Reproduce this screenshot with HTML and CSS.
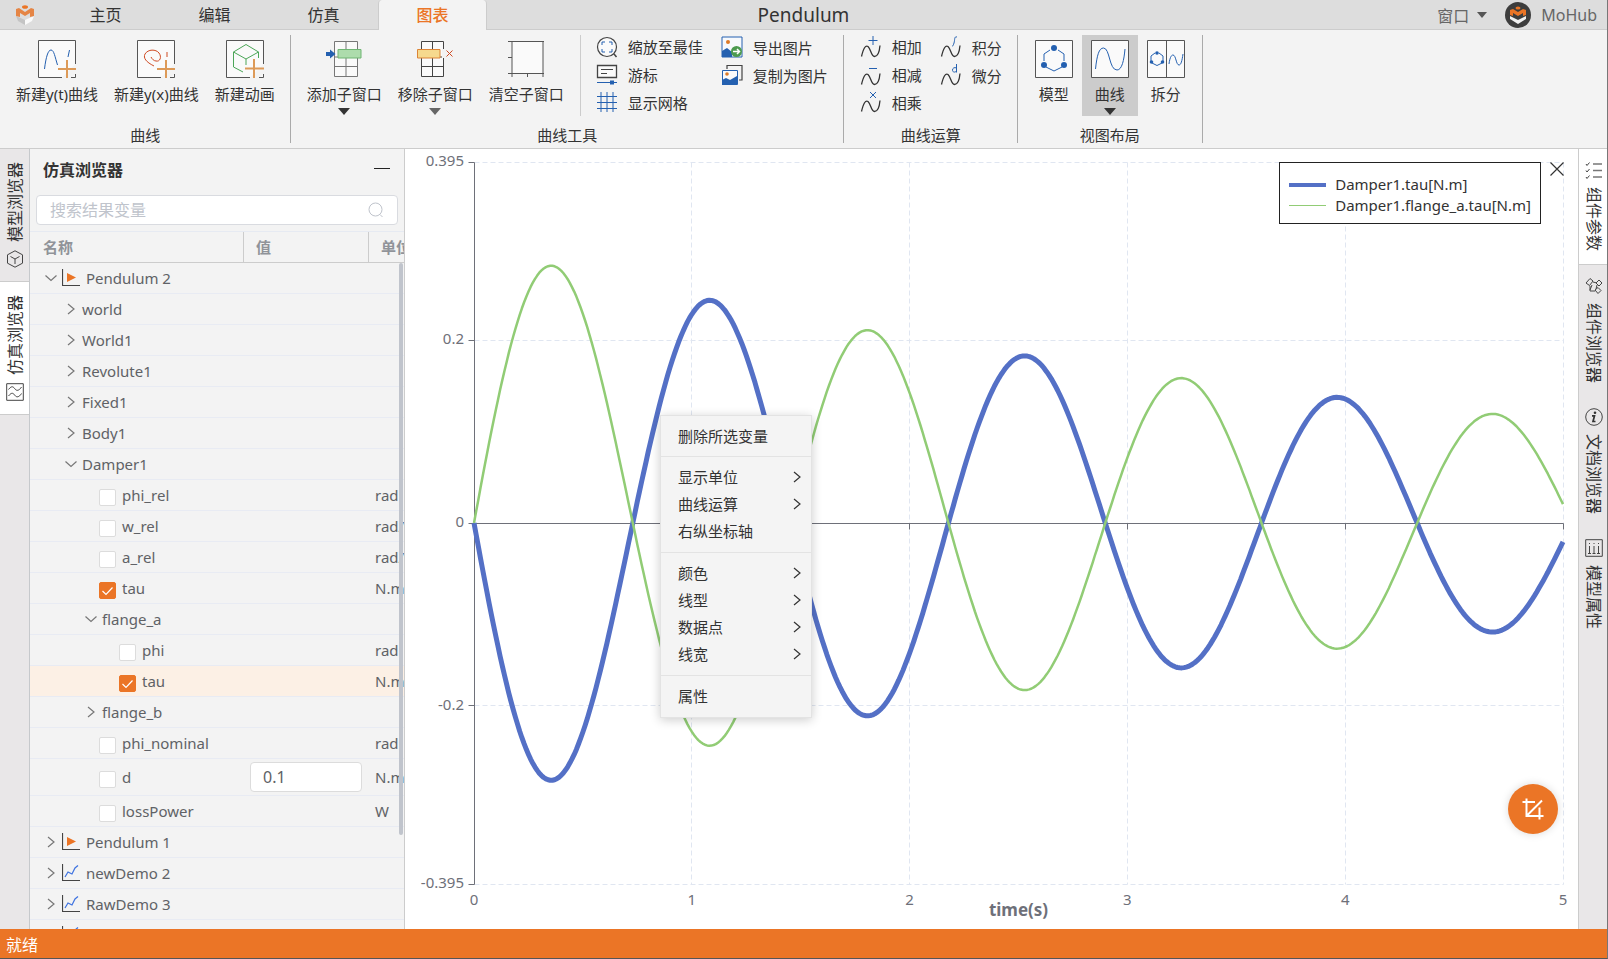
FILE: index.html
```html
<!DOCTYPE html>
<html lang="zh-CN">
<head>
  <meta charset="UTF-8">
  <meta name="viewport" content="width=device-width, initial-scale=1">
  <title>Pendulum</title>
  <link rel="stylesheet" href="styles.css">
</head>
<body>
  <!-- shared icon shapes -->
  <svg class="defs" aria-hidden="true">
    <symbol id="wave" viewBox="0 0 22 22">
      <path d="M1.500 20.500C3.500 12 5.500 9 8 10.500C11 13 11 20.500 14.500 20.500C18 20.500 19.500 15 20 9.500" fill="none" stroke="#333" stroke-width="1.300"/>
    </symbol>
    <symbol id="right" viewBox="0 0 12 12"><path d="M3 1l6 5-6 5" fill="none" stroke="currentColor" stroke-width="1.200"/></symbol>
    <symbol id="down" viewBox="0 0 12 12"><path d="M0.500 3.500L6 8.500l5.500-5" fill="none" stroke="currentColor" stroke-width="1.200"/></symbol>
    <symbol id="run" viewBox="0 0 18 18">
      <path d="M0.500 0v16.500H18" fill="none" stroke="#444" stroke-width="1.200"/>
      <path d="M5 4l9 4.500L5 13z" fill="#eb7526"/>
    </symbol>
    <symbol id="data" viewBox="0 0 18 18">
      <path d="M0.500 0v16.500H18" fill="none" stroke="#444" stroke-width="1.200"/>
      <path d="M3 13l3-5 4 2 3-6 3-2.500" fill="none" stroke="#3d72e0" stroke-width="1.200"/>
    </symbol>
  </svg>

  <header class="titlebar">
    <div class="titlebar-left">
      <svg class="logo" viewBox="0 0 18 20">
        <path d="M0 11l9 4v5l-7-4z" fill="#c4c4c4"/>
        <path d="M18 11l-9 4v5l7-4z" fill="#fafafa"/>
        <path d="M0 11V4l3-1 6 4 6-4 3 1v7l-4 1V8l-5 3-5-3v4z" fill="#e58545"/>
        <ellipse cx="9" cy="2" rx="3" ry="1.800" fill="#eb7526"/>
      </svg>
      <nav class="tabs">
        <button class="tab">主页</button>
        <button class="tab">编辑</button>
        <button class="tab">仿真</button>
        <button class="tab active">图表</button>
      </nav>
    </div>
    <div class="doc-title">Pendulum</div>
    <div class="titlebar-right">
      <button class="window-btn">窗口 <span class="caret small"></span></button>
      <svg class="avatar" viewBox="0 0 26 26">
        <circle cx="13" cy="13" r="13" fill="#3d3d3d"/>
        <path d="M5 14l8 4 8-4v3l-8 5-8-5z" fill="#f0f0f0"/>
        <path d="M5 13V8l3-1 5 3 5-3 3 1v5l-3 1v-3l-5 3-5-3v3z" fill="#eb7526"/>
        <ellipse cx="13" cy="6" rx="2.500" ry="1.500" fill="#eb7526"/>
      </svg>
      <span class="user">MoHub</span>
    </div>
  </header>

  <section class="ribbon">
    <div class="group">
      <div class="group-body">
        <button class="big">
          <svg viewBox="0 0 38 38"><path d="M37.500 24V0.500H0.500v37H24M33 37.500h4.500V34" class="frame"/><path d="M6.500 29C8 17 10 10 13 10s4 7 6.500 15M30 17l1.500-7" class="blue"/><path d="M20 29h18M29 20v18" class="plus"/></svg>
          新建y(t)曲线
        </button>
        <button class="big">
          <svg viewBox="0 0 38 38"><path d="M37.500 24V0.500H0.500v37H24M33 37.500h4.500V34" class="frame"/><path d="M17 26C9 22 6 18 8 14c3-5 11-5 14-1s1 9-3 8c-2 0-4-2-5-4M30 17v-5" class="red"/><path d="M20 29h18M29 20v18" class="plus"/></svg>
          新建y(x)曲线
        </button>
        <button class="big">
          <svg viewBox="0 0 38 38"><path d="M37.500 24V0.500H0.500v37H24M33 37.500h4.500V34" class="frame"/><path d="M20 4.500L7.500 12v15L17 32M20 4.500L32.500 12v6M7.500 12L20 19l12.500-7M20 19v6" class="green"/><path d="M19 28.500h19M28 19v19" class="plus"/></svg>
          新建动画
        </button>
      </div>
      <div class="group-name">曲线</div>
    </div>

    <div class="group">
      <div class="group-body">
        <button class="big">
          <svg viewBox="0 0 38 38"><path d="M9.500 1.500h23v35h-23zM21 1v36M9 26.500h24M9 17h24" class="grid-box"/><path d="M30 9h4v9h-4z" fill="#f3f3f3"/><path d="M13 9.500h23v8.500H13z" fill="#addcac" stroke="#6fb573"/><path d="M1 12h4V9.500l5.500 4.500L5 18.500V16H1z" fill="#2460b0"/></svg>
          添加子窗口
          <span class="caret"></span>
        </button>
        <button class="big">
          <svg viewBox="0 0 38 38"><path d="M5.500 1.500h22v35h-22zM16.500 1v36M5 26.500h23M5 17h23" class="grid-box dark"/><path d="M26 9h4v9h-4z" fill="#f3f3f3"/><path d="M1.500 9.500H24V18H1.500z" fill="#f6d98e" stroke="#dc8436"/><path d="M30.500 10.500l6 6M36.500 10.500l-6 6" class="red"/></svg>
          移除子窗口
          <span class="caret light"></span>
        </button>
        <button class="big">
          <svg viewBox="0 0 38 38"><path d="M5 1.500h31v32H5z" fill="#fafafa"/><path d="M1 1.500h36M1 17.500h4M1 33.500h36M5 1v36M36 1v36M20.500 33v4" class="frame"/></svg>
          清空子窗口
        </button>
        <div class="divider"></div>
        <div class="stack">
          <button class="small-btn">
            <svg viewBox="0 0 22 22"><circle cx="11" cy="11" r="9.500" fill="#fafafa" stroke="#444" stroke-width="1.200"/><path d="M18 18l2.500 3" stroke="#444" stroke-width="1.500"/><path d="M6 9V6h3M13 6h3v3M16 13v3h-3M9 16H6v-3" class="blue"/></svg>
            缩放至最佳
          </button>
          <button class="small-btn">
            <svg viewBox="0 0 22 22"><path d="M1.500 1.500h19v12h-19z" fill="#fafafa" stroke="#444" stroke-width="1.300"/><path d="M5 5.500h12M5 9.500h6" stroke="#444"/><path d="M1 18.500h20" class="blue"/><path d="M14 16.500h4v4h-4z" fill="#2460b0"/></svg>
            游标
          </button>
          <button class="small-btn">
            <svg viewBox="0 0 22 22"><path d="M5 1v20M11 1v20M17 1v20M1 5.500h20M1 11.500h20M1 17.500h20" class="blue"/></svg>
            显示网格
          </button>
        </div>
        <div class="stack">
          <button class="small-btn">
            <svg viewBox="0 0 22 22"><path d="M1 1h20v20H1z" fill="#f7f9fc" stroke="#2460b0"/><circle cx="7" cy="6" r="2" fill="#dc7a28"/><path d="M1 21v-6l5-3 5 4v5z" fill="#2460b0"/><circle cx="15.500" cy="15.500" r="5.500" fill="#4c9a4f"/><path d="M12 15.500h6M16 13l2.500 2.500L16 18" fill="none" stroke="#fff" stroke-width="1.500"/></svg>
            导出图片
          </button>
          <button class="small-btn">
            <svg viewBox="0 0 22 22"><path d="M6 5V1.500h15V16h-3" fill="none" stroke="#444" stroke-width="1.200"/><path d="M1.500 6.500h15v14h-15z" fill="#fafafa" stroke="#2460b0"/><circle cx="6" cy="10" r="1.800" fill="#dc7a28"/><path d="M1 21v-5l4-2 4 2 7-4v9z" fill="#2460b0"/></svg>
            复制为图片
          </button>
        </div>
      </div>
      <div class="group-name">曲线工具</div>
    </div>

    <div class="group">
      <div class="group-body">
        <div class="stack">
          <button class="small-btn"><svg viewBox="0 0 22 22"><use href="#wave"/><path d="M13 0v9M8.500 4.500h9" class="blue"/></svg>相加</button>
          <button class="small-btn"><svg viewBox="0 0 22 22"><use href="#wave"/><path d="M9 4.500h8" class="blue"/></svg>相减</button>
          <button class="small-btn"><svg viewBox="0 0 22 22"><use href="#wave"/><path d="M10 1l6 6M16 1l-6 6" class="blue"/></svg>相乘</button>
        </div>
        <div class="stack">
          <button class="small-btn"><svg viewBox="0 0 22 22"><use href="#wave"/><path d="M17 1c-3-1-2 3-3 6s-1 3-2 3" class="blue"/></svg>积分</button>
          <button class="small-btn"><svg viewBox="0 0 22 22"><use href="#wave"/><path d="M16.500 0v8.500M16.500 4c-2-1-4 0-4 2s2 3 4 1" class="blue"/></svg>微分</button>
        </div>
      </div>
      <div class="group-name">曲线运算</div>
    </div>

    <div class="group">
      <div class="group-body">
        <button class="big view">
          <svg viewBox="0 0 38 38"><path d="M0.500 0.500h37v37h-37z" class="frame"/><path d="M15 10l-6 4v7M23 10l6 4v7M11 27l8 4 8-4" class="blue"/><g fill="#2460b0"><circle cx="19" cy="8" r="3"/><circle cx="9" cy="25" r="3"/><circle cx="29" cy="25" r="3"/></g></svg>
          模型
        </button>
        <button class="big view active">
          <svg viewBox="0 0 38 38"><path d="M0.500 0.500h37v37h-37z" class="frame"/><path d="M4.500 29C6 15 8 8 12.500 8C19 8 18 30 26 30c5 0 7-10 8-21" class="blue"/></svg>
          曲线
          <span class="caret"></span>
        </button>
        <button class="big view">
          <svg viewBox="0 0 38 38"><path d="M0.500 0.500h37v37h-37zM19.500 0v38" class="frame"/><path d="M8 13l-4 3v5M12 13l4 3v5M5 23l5 2.500 5-2.500M22 24c1-8 3-9 4-9 3 0 3 10 6 10 2 0 3-4 4-11" class="blue"/><g fill="#2460b0"><circle cx="10" cy="13" r="1.800"/><circle cx="4.500" cy="22" r="1.800"/><circle cx="15.500" cy="22" r="1.800"/></g></svg>
          拆分
        </button>
      </div>
      <div class="group-name">视图布局</div>
    </div>
  </section>

  <main class="workspace">
    <aside class="rail left">
      <button class="rail-item">
        <span>模型浏览器</span>
        <svg viewBox="0 0 18 18"><path d="M9 0.800l7.500 4v8.400L9 17.200l-7.500-4V4.800zM4.500 6.500L9 9l4.500-2.500M9 9v5" class="line"/></svg>
      </button>
      <button class="rail-item active">
        <span>仿真浏览器</span>
        <svg viewBox="0 0 18 18"><path d="M0.700 0.700h16.600v16.600H0.700zM2.500 6.500C6 2 7.500 4 9 6s4 2 6.500-2M2.500 13C6 8.500 7.500 10.500 9 12.500s4 2 6.500-2" class="line"/></svg>
      </button>
    </aside>

    <section class="panel">
      <div class="panel-head">
        <h2>仿真浏览器</h2>
        <button class="minimize" aria-label="最小化"></button>
      </div>
      <div class="search">
        <input type="text" placeholder="搜索结果变量" aria-label="搜索结果变量">
        <svg viewBox="0 0 16 16"><circle cx="7.500" cy="7.500" r="6.500" fill="none" stroke="#c0c4cc"/><path d="M12 12.500l2.500 2.500" stroke="#c0c4cc"/></svg>
      </div>
      <div class="tree-wrap">
        <table class="tree">
          <colgroup><col class="col-name"><col class="col-value"><col class="col-unit"></colgroup>
          <thead>
            <tr><th>名称</th><th>值</th><th>单位</th></tr>
          </thead>
          <tbody id="treeRows"></tbody>
        </table>
        <div class="scroll-thumb"></div>
      </div>
    </section>

    <section class="chart-area">
      <svg id="chart" class="chart"></svg>

      <div class="legend">
        <div class="legend-row"><i class="key tau"></i>Damper1.tau[N.m]</div>
        <div class="legend-row"><i class="key flange"></i>Damper1.flange_a.tau[N.m]</div>
      </div>
      <button class="close" aria-label="关闭">
        <svg viewBox="0 0 14 14"><path d="M0.500 0.500l13 13M13.500 0.500l-13 13" stroke="#333" stroke-width="1.200"/></svg>
      </button>

      <div class="menu">
        <div class="menu-group">
          <button>删除所选变量</button>
        </div>
        <div class="menu-group">
          <button>显示单位<svg><use href="#right"/></svg></button>
          <button>曲线运算<svg><use href="#right"/></svg></button>
          <button>右纵坐标轴</button>
        </div>
        <div class="menu-group">
          <button>颜色<svg><use href="#right"/></svg></button>
          <button>线型<svg><use href="#right"/></svg></button>
          <button>数据点<svg><use href="#right"/></svg></button>
          <button>线宽<svg><use href="#right"/></svg></button>
        </div>
        <div class="menu-group">
          <button>属性</button>
        </div>
      </div>

      <button class="fab" aria-label="裁剪">
        <svg viewBox="0 0 22 22"><path d="M4.500 0.500v17.500H21.500M0.500 4h12.500M17.500 9.500V21.500M5 17.500L20 2.500" fill="none" stroke="#fff" stroke-width="2"/></svg>
      </button>
    </section>

    <aside class="rail right">
      <button class="rail-item active">
        <svg viewBox="0 0 18 18"><path d="M8 3h9M8 9.500h9M8 16h9" stroke="#777" stroke-width="1.500"/><path d="M1 3l1 1.500L4.500 1.500M1 9.500L2 11l2.500-3M1 16l1 1.500 2.500-3" class="line"/></svg>
        <span>组件参数</span>
      </button>
      <button class="rail-item">
        <svg viewBox="0 0 18 18"><path d="M1 6l4-4.500L8 4 4.500 8.500zM11 6l3-3 3 3-3 3zM10 13l3-2.500 3 3-3 3zM5 9v5h5M8 5l4 1M12 8l-1 4M5 13l2-5" class="line"/></svg>
        <span>组件浏览器</span>
      </button>
      <button class="rail-item">
        <svg viewBox="0 0 18 18"><circle cx="9" cy="9" r="8.300" class="line"/><circle cx="10" cy="4.800" r="1.300" fill="#333"/><path d="M7 7.800h2.500L8 13.500h2.500" fill="none" stroke="#333" stroke-width="1.700"/></svg>
        <span>文档浏览器</span>
      </button>
      <button class="rail-item">
        <svg viewBox="0 0 18 18"><path d="M0.700 0.700h16.600v16.600H0.700zM4.500 4v1M4.500 7v7M9 4v1M9 7v7M13.500 4v1M13.500 7v7M3 14.500h3M7.500 14.500h3M12 14.500h3" class="line"/></svg>
        <span>模型属性</span>
      </button>
    </aside>
  </main>

  <footer class="status">就绪</footer>

  <script src="script.js"></script>
</body>
</html>
```
FILE: styles.css
```css
* {
  box-sizing: border-box;
}
body {
  margin: 0;
  height: 100vh;
  display: flex;
  flex-direction: column;
  overflow: hidden;
  font-family: "Noto Sans", "Noto Sans CJK SC", sans-serif;
  font-size: 15px;
  color: #333;
  background: #f3f3f3;
  border-right: 1px solid #777;
  border-bottom: 1px solid #555;
}
button {
  font: inherit;
  color: inherit;
  background: none;
  border: none;
  padding: 0;
  margin: 0;
  cursor: pointer;
}
svg {
  display: block;
  flex: none;
}
.defs {
  position: absolute;
  width: 0;
  height: 0;
}

/* title bar */
.titlebar {
  flex: none;
  height: 30px;
  display: grid;
  grid-template-columns: 1fr auto 1fr;
  background: #ddd;
  border-bottom: 1px solid #ccc;
}
.titlebar-left {
  display: flex;
  align-items: center;
  padding-left: 16px;
}
.logo {
  width: 18px;
  height: 20px;
}
.tabs {
  display: flex;
  margin-left: 17px;
}
.tab {
  width: 109px;
  height: 30px;
  font-size: 16px;
  line-height: 30px;
}
.tab.active {
  color: #eb7526;
  font-weight: 500;
  background: #f3f3f3;
  border: 1px solid #ccc;
  border-width: 0 1px;
  border-radius: 4px 4px 0 0;
}
.doc-title {
  font-size: 19px;
  line-height: 30px;
}
.titlebar-right {
  display: flex;
  align-items: center;
  justify-content: flex-end;
  gap: 10px;
  padding-right: 10px;
  font-size: 16px;
  color: #666;
}
.window-btn {
  display: flex;
  align-items: center;
  gap: 8px;
  margin-right: 8px;
}
.avatar {
  width: 26px;
  height: 26px;
}
.caret {
  border: 6px solid transparent;
  border-top: 7px solid #333;
  border-bottom: none;
}
.caret.light {
  border-top-color: #666;
}
.caret.small {
  border-width: 6px 5px 0;
  border-top-color: #555;
}

/* ribbon */
.ribbon {
  flex: none;
  height: 119px;
  display: flex;
  padding: 5px 0;
  border-bottom: 1px solid #ccc;
}
.group {
  display: flex;
  flex-direction: column;
  justify-content: space-between;
  padding: 0 7px 0 8px;
  border-right: 1px solid #aaa;
}
.group:last-child {
  padding-right: 8px;
}
.group-body {
  display: flex;
  height: 81px;
}
.group-name {
  text-align: center;
  line-height: 16px;
}
.big {
  display: flex;
  flex-direction: column;
  align-items: center;
  min-width: 56px;
  padding: 5px 8px 0;
  line-height: 32px;
  white-space: nowrap;
}
.big svg {
  width: 38px;
  height: 38px;
}
.big .caret {
  margin-top: -2px;
}
.big.active {
  background: #ccc;
}
.divider {
  width: 1px;
  margin: 0 8px;
  background: #ccc;
}
.stack {
  display: flex;
  flex-direction: column;
  margin-top: -2px;
  padding: 0 8px;
}
.stack + .stack {
  padding-left: 10px;
}
.divider + .stack {
  padding-left: 7px;
}
.small-btn {
  display: flex;
  align-items: center;
  gap: 10px;
  height: 28px;
  white-space: nowrap;
}
.small-btn svg {
  width: 22px;
  height: 22px;
}
.frame {
  fill: #fafafa;
  stroke: #555;
}
.grid-box {
  fill: #fafafa;
  stroke: #777;
}
.grid-box.dark {
  stroke: #444;
}
.blue, .red, .green, .plus, .line {
  fill: none;
}
.blue { stroke: #2460b0; }
.red { stroke: #cf4a22; }
.green { stroke: #4ca658; }
.plus { stroke: #dd9a58; stroke-width: 2; }
.line { stroke: #444; }

/* main row */
.workspace {
  flex: 1;
  min-height: 0;
  display: flex;
}
.rail {
  flex: none;
  width: 30px;
  background: #e9e7e8;
}
.rail.left {
  border-right: 1px solid #c6c9cc;
}
.rail.right {
  width: 29px;
  border-left: 1px solid #ccc;
}
.rail-item {
  width: 100%;
  display: flex;
  flex-direction: column;
  align-items: center;
  gap: 8px;
  padding: 13px 0;
  font-size: 16px;
}
.rail-item span {
  writing-mode: vertical-rl;
  text-orientation: sideways;
  line-height: 20px;
}
.rail.left span {
  transform: rotate(180deg);
}
.rail-item svg {
  width: 18px;
  height: 18px;
}
.rail-item.active {
  background: #fff;
  border-bottom: 1px solid #ccc;
}
.rail.left .active {
  border-top: 1px solid #ccc;
}
.rail.right .rail-item {
  padding: 12px 0 13px 2px;
}

/* result browser */
.panel {
  flex: none;
  width: 375px;
  display: flex;
  flex-direction: column;
  border-right: 1px solid #ccc;
}
.panel-head {
  display: flex;
  justify-content: space-between;
  height: 42px;
  padding: 0 14px 0 13px;
}
.panel-head h2 {
  margin: 0;
  font-size: 16px;
  line-height: 43px;
}
.minimize {
  width: 16px;
  height: 38px;
  background: linear-gradient(#222, #222) center / 100% 1px no-repeat;
}
.search {
  display: flex;
  align-items: center;
  height: 30px;
  margin: 4px 6px 6px;
  padding: 0 13px;
  background: #fff;
  border: 1px solid #d9dbe0;
  border-radius: 4px;
}
.search input {
  flex: 1;
  min-width: 0;
  padding: 0;
  border: none;
  outline: none;
  font: inherit;
  font-size: 16px;
}
.search input::placeholder {
  color: #c0c4cc;
}
.search svg {
  width: 16px;
  height: 16px;
}
.tree-wrap {
  position: relative;
  flex: 1;
  min-height: 0;
  overflow: hidden;
  border-top: 1px solid #e6eaf2;
}
.tree {
  width: 420px;
  table-layout: fixed;
  border-collapse: separate;
  border-spacing: 0;
  color: #606266;
}
.col-name { width: 214px; }
.col-value { width: 125px; }
.tree th {
  height: 31px;
  padding: 0 12px;
  text-align: left;
  font-weight: bold;
  line-height: 20px;
  color: #909399;
  border-right: 1px solid #ccc;
  border-bottom: 1px solid #ccc;
}
.tree th:first-child {
  padding-left: 13px;
}
.tree td {
  height: 31px;
  padding: 0 6px;
  line-height: 20px;
  border-bottom: 1px solid #e8ebf3;
}
.tree tr.selected td {
  background: #fcf0e5;
}
.node {
  display: flex;
  align-items: center;
}
.node.level-0 { padding-left: 5px; }
.node.level-1 { padding-left: 25px; }
.node.level-2 { padding-left: 45px; }
.node.level-3 { padding-left: 65px; }
.toggle {
  width: 20px;
  margin-right: 1px;
  color: #777;
}
.toggle svg {
  width: 12px;
  height: 12px;
  margin: auto;
}
.node .kind {
  width: 18px;
  height: 18px;
  margin-right: 6px;
}
.node input {
  appearance: none;
  width: 17px;
  height: 17px;
  margin: 4px 6px 0 18px;
  background: #fff;
  border: 1px solid #dcdcdc;
  border-radius: 2px;
}
.node input:checked {
  border-color: #eb7526;
  background: #eb7526 url("data:image/svg+xml,%3Csvg xmlns='http://www.w3.org/2000/svg' viewBox='0 0 15 15'%3E%3Cpath d='M2.500 8l3.500 3.500 6.500-7' fill='none' stroke='white' stroke-width='1.200'/%3E%3C/svg%3E");
}
.value {
  display: block;
  width: 112px;
  height: 30px;
  margin: 3px 0;
  padding: 0 12px;
  font: inherit;
  font-size: 16px;
  color: #606266;
  background: #fff;
  border: 1px solid #dcdcdc;
  border-radius: 4px;
}
.scroll-thumb {
  position: absolute;
  right: 1px;
  top: 31px;
  width: 4px;
  height: 82%;
  border-radius: 2px;
  background: #c0c4cc;
}

/* chart */
.chart-area {
  position: relative;
  flex: 1;
  min-width: 0;
  background: #fff;
}
.chart {
  width: 100%;
  height: 100%;
}
.chart text {
  fill: #6e7079;
}
.chart .axis-name {
  font-size: 17px;
  font-weight: bold;
}
.chart .grid {
  stroke: #e0e6f1;
  stroke-dasharray: 5 3;
}
.chart .axis {
  stroke: #6e7079;
}
.chart .curve {
  fill: none;
  stroke-linejoin: round;
}
.chart .tau {
  stroke: #5470c6;
  stroke-width: 5;
}
.chart .flange {
  stroke: #91cc75;
  stroke-width: 2.5;
}
.legend {
  position: absolute;
  top: 13px;
  right: 37px;
  padding: 11px 9px 7px 9px;
  background: #fff;
  border: 1px solid #222;
}
.legend-row {
  display: flex;
  align-items: center;
  gap: 9px;
  line-height: 21px;
}
.key {
  width: 37px;
  border-top: 1px solid #91cc75;
}
.key.tau {
  border-top: 4px solid #5470c6;
}
.close {
  position: absolute;
  top: 13px;
  right: 14px;
}
.close svg {
  width: 14px;
  height: 14px;
}
.menu {
  position: absolute;
  left: 255px;
  top: 266px;
  width: 152px;
  background: #f4f4f4;
  border: 1px solid #e3e3e3;
  box-shadow: 0 2px 10px rgba(0,0,0,0.2);
}
.menu-group {
  padding: 6px 0 8px;
}
.menu-group:first-child {
  padding-bottom: 7px;
}
.menu-group + .menu-group {
  border-top: 1px solid #e3e3e3;
}
.menu button {
  display: flex;
  width: 100%;
  justify-content: space-between;
  align-items: center;
  height: 27px;
  padding: 0 8px 0 17px;
}
.menu svg {
  width: 12px;
  height: 12px;
}
.fab {
  position: absolute;
  right: 20px;
  bottom: 95px;
  width: 50px;
  height: 50px;
  border-radius: 50%;
  background: #eb7526;
  box-shadow: 0 0 8px rgba(0,0,0,0.15);
}
.fab svg {
  width: 22px;
  height: 22px;
  margin: auto;
}

.status {
  flex: none;
  height: 29px;
  padding: 0 6px;
  font-size: 16px;
  line-height: 32px;
  color: #fff;
  background: #eb7526;
}
```
FILE: script.js
```js
const rows = [
  { name: "Pendulum 2", level: 0, arrow: "down", icon: "run" },
  { name: "world", level: 1, arrow: "right" },
  { name: "World1", level: 1, arrow: "right" },
  { name: "Revolute1", level: 1, arrow: "right" },
  { name: "Fixed1", level: 1, arrow: "right" },
  { name: "Body1", level: 1, arrow: "right" },
  { name: "Damper1", level: 1, arrow: "down" },
  { name: "phi_rel", level: 2, unit: "rad" },
  { name: "w_rel", level: 2, unit: "rad/s" },
  { name: "a_rel", level: 2, unit: "rad/s2" },
  { name: "tau", level: 2, unit: "N.m", checked: true },
  { name: "flange_a", level: 2, arrow: "down" },
  { name: "phi", level: 3, unit: "rad" },
  { name: "tau", level: 3, unit: "N.m", checked: true, selected: true },
  { name: "flange_b", level: 2, arrow: "right" },
  { name: "phi_nominal", level: 2, unit: "rad" },
  { name: "d", level: 2, unit: "N.m.s/rad", value: "0.1" },
  { name: "lossPower", level: 2, unit: "W" },
  { name: "Pendulum 1", level: 0, arrow: "right", icon: "run" },
  { name: "newDemo 2", level: 0, arrow: "right", icon: "data" },
  { name: "RawDemo 3", level: 0, arrow: "right", icon: "data" },
  { name: "RawDemo 2", level: 0, arrow: "right", icon: "data" }
];

let html = "";
rows.forEach((row, i) => {
  let node = "";
  if (row.arrow) {
    node += `<button class="toggle" aria-label="${row.name}"><svg><use href="#${row.arrow}"/></svg></button>`;
    if (row.icon) node += `<svg class="kind"><use href="#${row.icon}"/></svg>`;
    node += `<span>${row.name}</span>`;
  } else {
    node += `<input type="checkbox" id="var${i}" ${row.checked ? "checked" : ""}><label for="var${i}">${row.name}</label>`;
  }
  const value = row.value ? `<input class="value" type="text" value="${row.value}" aria-label="${row.name}">` : "";
  html += `<tr class="${row.selected ? "selected" : ""}">
    <td><div class="node level-${row.level}">${node}</div></td><td>${value}</td><td>${row.unit || ""}</td></tr>`;
});
document.getElementById("treeRows").innerHTML = html;

// damper torque: decaying oscillation, period shrinks slightly as the swing gets smaller
function torque(t) {
  return 0.3024 * Math.exp(-0.1986 * t) * Math.sin(Math.PI * t * (1.3687 + 0.0039 * t));
}

function drawChart() {
  const svg = document.getElementById("chart");
  const w = svg.clientWidth;
  const h = svg.clientHeight;
  const left = 69, right = w - 15, top = 13, bottom = h - 45;
  const x = t => left + (right - left) * t / 5;
  const y = v => top + (bottom - top) * (0.395 - v) / 0.79;
  const snap = n => Math.floor(n) + 0.5;
  const line = (cls, x1, y1, x2, y2) =>
    `<line class="${cls}" x1="${snap(x1)}" y1="${snap(y1)}" x2="${snap(x2)}" y2="${snap(y2)}"/>`;

  let out = "";
  [0.395, 0.2, 0, -0.2, -0.395].forEach(v => {
    if (v !== 0) out += line("grid", left, y(v), right, y(v));
    out += line("axis", left - 6, y(v), left, y(v));
    out += `<text x="${left - 10}" y="${y(v) + 4}" text-anchor="end">${v}</text>`;
  });
  for (let t = 0; t <= 5; t++) {
    if (t > 0) out += line("grid", x(t), top, x(t), bottom);
    out += line("axis", x(t), y(0), x(t), y(0) + 6);
    out += `<text x="${x(t)}" y="${bottom + 21}" text-anchor="middle">${t}</text>`;
  }
  out += line("axis", left, top, left, bottom);
  out += line("axis", left, y(0), right, y(0));
  out += `<text class="axis-name" x="${(left + right) / 2}" y="${bottom + 32}" text-anchor="middle">time(s)</text>`;

  let tau = "", flange = "";
  for (let i = 0; i <= 500; i++) {
    const t = i / 100;
    const cmd = i === 0 ? "M" : "L";
    tau += `${cmd}${x(t).toFixed(1)} ${y(-torque(t)).toFixed(1)}`;
    flange += `${cmd}${x(t).toFixed(1)} ${y(torque(t)).toFixed(1)}`;
  }
  out += `<path class="curve tau" d="${tau}"/><path class="curve flange" d="${flange}"/>`;
  svg.innerHTML = out;
}

drawChart();
window.addEventListener("resize", drawChart);
```
